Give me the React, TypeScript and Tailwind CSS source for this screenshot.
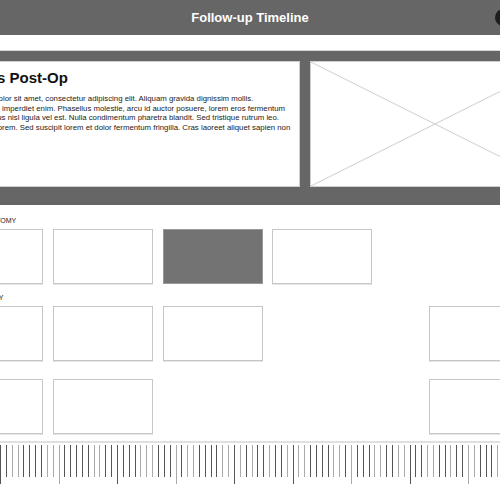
import React from 'react';

// tick shades read off the ruler, d = dark, l = light
const TICKS =
  'ddllddddllldddddllddddddllldddldllddddlldldlddlddldllddddlldldddllddlldddllddlddlldddlld';

const Box: React.FC<{ left: number; dark?: boolean }> = ({ left, dark }) => (
  <div
    className={`absolute top-0 w-[100px] h-[55px] border ${
      dark ? 'bg-[#737373] border-[#999]' : 'bg-white border-[#c6c6c6] shadow-[0_1px_0_#e6e6e6]'
    }`}
    style={{ left }}
  />
);

const Row: React.FC<{ items: { left: number; dark?: boolean }[] }> = ({ items }) => (
  <div className="relative h-[55px]">
    {items.map((it, i) => (
      <Box key={i} left={it.left} dark={it.dark} />
    ))}
  </div>
);

const Ruler: React.FC = () => {
  const step = 5.85;
  const count = Math.ceil(500 / step) + 1;
  return (
    <svg width="500" height="42" className="block">
      {Array.from({ length: count }).map((_, i) => {
        const x = Math.round(i * step) + 0.5;
        const major = i % 10 === 0;
        const dark = TICKS[i % TICKS.length] === 'd';
        return (
          <line
            key={i}
            x1={x}
            x2={x}
            y1={0}
            y2={major ? 39 : 32}
            stroke={dark ? '#555' : '#aaa'}
            strokeWidth={1}
          />
        );
      })}
    </svg>
  );
};

export default function App() {
  return (
    <div className="relative w-[500px] h-[500px] overflow-hidden bg-white font-['Liberation_Sans',Arial,sans-serif]">
      {/* Header */}
      <div className="relative h-[35px] bg-[#666] flex items-center justify-center">
        <span className="text-white font-bold text-[13px]">Follow-up Timeline</span>
        <div className="absolute left-[495px] top-[9px] w-[17px] h-[17px] rounded-full bg-[#1e1e1e]" />
      </div>

      {/* Empty toolbar strip */}
      <div className="h-[16px] bg-white border-b border-[#d6d6d6]" />

      {/* Summary band */}
      <div className="h-[154px] bg-[#666] pt-[10px] flex gap-[10px] ml-[-61px] w-[700px]">
        <div className="shrink-0 w-[361px] h-[126px] bg-white border border-[#cfcfcf] px-[7px] pt-[7px] text-[#111]">
          <h2 className="text-[15px] font-bold leading-[18px]">Patients Post-Op</h2>
          <div className="mt-[7px] text-[7.8px] leading-[9.7px] text-[#222] whitespace-nowrap">
            <div>Lorem ipsum dolor sit amet, consectetur adipiscing elit. Aliquam gravida dignissim mollis.</div>
            <div>Vestibulum sed imperdiet enim. Phasellus molestie, arcu id auctor posuere, lorem eros fermentum</div>
            <div>Fusce nec lectus nisl ligula vel est. Nulla condimentum pharetra blandit. Sed tristique rutrum leo.</div>
            <div>Aliquam vitae lorem. Sed suscipit lorem et dolor fermentum fringilla. Cras laoreet aliquet sapien non</div>
          </div>
        </div>
        <div className="shrink-0 w-[250px] h-[126px] bg-white border border-[#cfcfcf]">
          <svg width="248" height="124" viewBox="0 0 248 124" className="block">
            <line x1="0" y1="0" x2="248" y2="124" stroke="#ccc" strokeWidth="1" />
            <line x1="0" y1="124" x2="248" y2="0" stroke="#ccc" strokeWidth="1" />
          </svg>
        </div>
      </div>

      {/* Timeline rows */}
      <div className="ml-[-57px] w-[620px] pt-[11px]">
        <div className="pl-[24px] h-[10px] text-[7px] leading-[10px] text-[#222]">MASTECTOMY</div>
        <div className="mt-[3px]">
          <Row items={[{ left: 0 }, { left: 110 }, { left: 220, dark: true }, { left: 329 }]} />
        </div>
        <div className="mt-[9px] pl-[26px] h-[10px] text-[7px] leading-[10px] text-[#222]">SURGERY</div>
        <div className="mt-[3px]">
          <Row items={[{ left: 0 }, { left: 110 }, { left: 220 }, { left: 486 }]} />
        </div>
        <div className="mt-[18px]">
          <Row items={[{ left: 0 }, { left: 110 }, { left: 486 }]} />
        </div>
      </div>

      {/* Scale */}
      <div className="mt-[7px] h-[2px] bg-[#e0e0e0]" />
      <div className="mt-[2px]">
        <Ruler />
      </div>
    </div>
  );
}
